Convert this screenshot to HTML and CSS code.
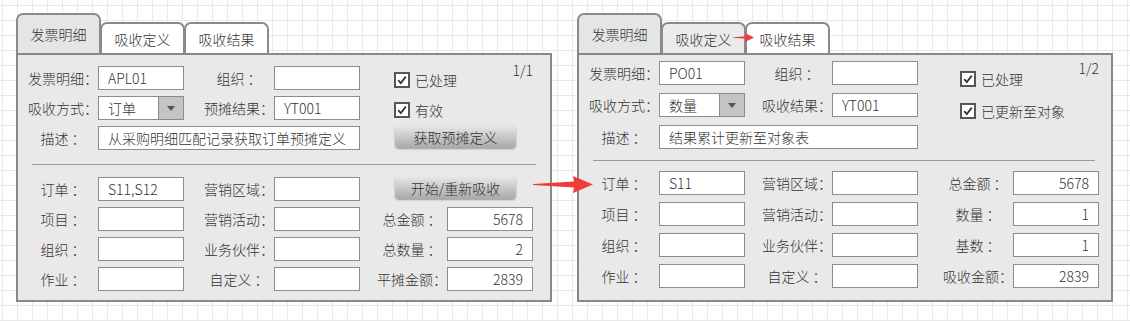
FILE: index.html
```html
<!DOCTYPE html>
<html lang="zh-CN">
<head>
  <meta charset="UTF-8" />
  <title>发票吸收</title>
  <link rel="stylesheet" href="styles.css">
</head>
<body>

  <div class="page">

    <!-- 吸收定义 -->
    <div class="window">
      <div class="tabs">
        <div class="tab tab--active">发票明细</div>
        <div class="tab">吸收定义</div>
        <div class="tab">吸收结果</div>
      </div>
      <div class="panel">
        <div class="grid">
          <label class="lbl col-1">发票明细：</label>
          <input type="text" class="txt col-2" value="APL01">
          <label class="lbl col-4">组织 ：</label>
          <input type="text" class="txt col-5" value="">
          <div class="side-top">
            <div class="check"><svg viewBox="0 0 16 16"><rect x="1" y="1" width="14" height="14" fill="#fff" stroke="#555" stroke-width="2"/><path d="M4.2 8.2 L6.8 11 L11.8 4.6" fill="none" stroke="#333" stroke-width="1.8"/></svg>已处理</div>
            <span class="pager">1/1</span>
          </div>

          <label class="lbl col-1">吸收方式：</label>
          <div class="select col-2"><span>订单</span><span class="select-btn"></span></div>
          <label class="lbl col-4">预摊结果：</label>
          <input type="text" class="txt col-5" value="YT001">
          <div class="check span-side"><svg viewBox="0 0 16 16"><rect x="1" y="1" width="14" height="14" fill="#fff" stroke="#555" stroke-width="2"/><path d="M4.2 8.2 L6.8 11 L11.8 4.6" fill="none" stroke="#333" stroke-width="1.8"/></svg>有效</div>

          <label class="lbl col-1">描述 ：</label>
          <input type="text" class="txt span-desc" value="从采购明细匹配记录获取订单预摊定义">
          <button type="button" class="btn span-side">获取预摊定义</button>
        </div>

        <div class="divider"></div>

        <div class="grid">
          <label class="lbl col-1">订单 ：</label>
          <input type="text" class="txt col-2" value="S11,S12">
          <label class="lbl col-4">营销区域：</label>
          <input type="text" class="txt col-5" value="">
          <button type="button" class="btn span-side">开始/重新吸收</button>

          <label class="lbl col-1">项目 ：</label>
          <input type="text" class="txt col-2" value="">
          <label class="lbl col-4">营销活动：</label>
          <input type="text" class="txt col-5" value="">
          <label class="lbl col-7">总金额 ：</label>
          <input type="text" class="txt txt--num col-8" value="5678">

          <label class="lbl col-1">组织 ：</label>
          <input type="text" class="txt col-2" value="">
          <label class="lbl col-4">业务伙伴：</label>
          <input type="text" class="txt col-5" value="">
          <label class="lbl col-7">总数量 ：</label>
          <input type="text" class="txt txt--num col-8" value="2">

          <label class="lbl col-1">作业 ：</label>
          <input type="text" class="txt col-2" value="">
          <label class="lbl col-4">自定义 ：</label>
          <input type="text" class="txt col-5" value="">
          <label class="lbl col-7">平摊金额：</label>
          <input type="text" class="txt txt--num col-8" value="2839">
        </div>
      </div>
    </div>

    <!-- 吸收结果 -->
    <div class="window window--result">
      <div class="tabs">
        <div class="tab tab--active">发票明细</div>
        <div class="tab tab--grey">吸收定义</div>
        <div class="tab">吸收结果</div>
        <svg class="tab-arrow" viewBox="0 0 21 9"><polygon points="0,4.2 13,3.2 12,0 21,4.5 12,9 13,5.8 0,4.8" fill="#ef3b3b"/></svg>
      </div>
      <div class="panel">
        <div class="grid">
          <label class="lbl col-1">发票明细：</label>
          <input type="text" class="txt col-2" value="PO01">
          <label class="lbl col-4">组织 ：</label>
          <input type="text" class="txt col-5" value="">
          <div class="side-top">
            <div class="check"><svg viewBox="0 0 16 16"><rect x="1" y="1" width="14" height="14" fill="#fff" stroke="#555" stroke-width="2"/><path d="M4.2 8.2 L6.8 11 L11.8 4.6" fill="none" stroke="#333" stroke-width="1.8"/></svg>已处理</div>
            <span class="pager">1/2</span>
          </div>

          <label class="lbl col-1">吸收方式：</label>
          <div class="select col-2"><span>数量</span><span class="select-btn"></span></div>
          <label class="lbl col-4">吸收结果：</label>
          <input type="text" class="txt col-5" value="YT001">
          <div class="check span-side"><svg viewBox="0 0 16 16"><rect x="1" y="1" width="14" height="14" fill="#fff" stroke="#555" stroke-width="2"/><path d="M4.2 8.2 L6.8 11 L11.8 4.6" fill="none" stroke="#333" stroke-width="1.8"/></svg>已更新至对象</div>

          <label class="lbl col-1">描述 ：</label>
          <input type="text" class="txt span-desc" value="结果累计更新至对象表">
        </div>

        <div class="divider"></div>

        <div class="grid">
          <label class="lbl col-1">订单 ：</label>
          <input type="text" class="txt col-2" value="S11">
          <label class="lbl col-4">营销区域：</label>
          <input type="text" class="txt col-5" value="">
          <label class="lbl col-7">总金额 ：</label>
          <input type="text" class="txt txt--num col-8" value="5678">

          <label class="lbl col-1">项目 ：</label>
          <input type="text" class="txt col-2" value="">
          <label class="lbl col-4">营销活动：</label>
          <input type="text" class="txt col-5" value="">
          <label class="lbl col-7">数量 ：</label>
          <input type="text" class="txt txt--num col-8" value="1">

          <label class="lbl col-1">组织 ：</label>
          <input type="text" class="txt col-2" value="">
          <label class="lbl col-4">业务伙伴：</label>
          <input type="text" class="txt col-5" value="">
          <label class="lbl col-7">基数 ：</label>
          <input type="text" class="txt txt--num col-8" value="1">

          <label class="lbl col-1">作业 ：</label>
          <input type="text" class="txt col-2" value="">
          <label class="lbl col-4">自定义 ：</label>
          <input type="text" class="txt col-5" value="">
          <label class="lbl col-7">吸收金额：</label>
          <input type="text" class="txt txt--num col-8" value="2839">
        </div>
      </div>
    </div>

    <svg class="flow-arrow" viewBox="0 0 60 17"><polygon points="0,8 41,5.5 40,0 60,8.5 40,17 41,11.5 0,9" fill="#ef3b3b"/></svg>
  </div>

</body>
</html>
```

FILE: styles.css
```css
* {
  margin: 0;
  padding: 0;
  box-sizing: border-box;
}

body {
  font-family: "Noto Sans CJK SC", "Noto Sans", sans-serif;
  font-size: 14px;
  font-weight: 300;
  color: #333;
  background-color: #fff;
  background-image:
    linear-gradient(to right, #e9e9e9 1px, transparent 1px),
    linear-gradient(to bottom, #e9e9e9 1px, transparent 1px);
  background-size: 15px 15px;
  background-position: 2px 5px;
  min-height: 321px;
}

.page {
  position: relative;
  display: flex;
  gap: 25px;
  padding: 13px 0 0 16px;
}

.window {
  width: 536px;
}

/* tabs */
.tabs {
  position: relative;
  display: flex;
  align-items: flex-end;
  height: 40px;
}

.tab {
  width: 85px;
  height: 31px;
  margin-left: -1px;
  border: 2px solid #8a8a8a;
  border-bottom: none;
  border-radius: 7px 7px 0 0;
  background: #fff;
  display: flex;
  align-items: center;
  justify-content: center;
}

.tab:first-child {
  margin-left: 0;
}

.tab--active {
  height: 40px;
  background: #e5e5e5;
}

.tab--grey {
  background: #ebebeb;
}

.tab-arrow {
  position: absolute;
  left: 156px;
  top: 20px;
  width: 21px;
  height: 9px;
}

/* panel */
.panel {
  height: 249px;
  border: 2px solid #888;
  background: #e9e9e9;
  padding: 11px 14px 0 10px;
}

.grid {
  display: grid;
  grid-template-columns: 70px 86px 20px 70px 86px 17px 70px 86px;
  grid-auto-rows: 24px;
  row-gap: 6px;
}

.col-1 { grid-column: 1; }
.col-2 { grid-column: 2; }
.col-4 { grid-column: 4; }
.col-5 { grid-column: 5; }
.col-7 { grid-column: 7; }
.col-8 { grid-column: 8; }
.span-desc { grid-column: 2 / 6; }
.span-side { grid-column: 7 / 9; }

.lbl {
  display: flex;
  align-items: center;
  justify-content: center;
  white-space: pre;
}

.txt {
  width: 100%;
  height: 24px;
  border: 1px solid #8c8c8c;
  background: #fff;
  padding: 0 9px;
  font: inherit;
  color: #333;
  outline: none;
}

.txt--num {
  text-align: right;
}

.select {
  display: flex;
  height: 24px;
  border: 1px solid #8c8c8c;
  background: #fff;
}

.select span:first-child {
  flex: 1;
  padding-left: 9px;
  line-height: 22px;
}

.select-btn {
  width: 25px;
  border-left: 1px solid #8c8c8c;
  background: #c4c4c4;
  display: flex;
  align-items: center;
  justify-content: center;
}

.select-btn::after {
  content: "";
  border-left: 4px solid transparent;
  border-right: 4px solid transparent;
  border-top: 5px solid #555;
}

.side-top {
  grid-column: 7 / 9;
  display: flex;
  justify-content: space-between;
  align-items: flex-start;
}

.check {
  display: flex;
  align-items: center;
  gap: 5px;
  height: 16px;
  margin: 6px 0 0 17px;
  align-self: start;
  white-space: nowrap;
}

.check svg {
  width: 16px;
  height: 16px;
}

.pager {
  line-height: 20px;
  margin-top: -6px;
}

.btn {
  align-self: start;
  width: 121px;
  height: 23px;
  margin: -1px 0 0 18px;
  border: none;
  border-radius: 4px;
  background: linear-gradient(to bottom, #e9e9e9, #a9a9a9);
  box-shadow: 0 1px 2px rgba(0, 0, 0, 0.35);
  font: inherit;
  color: #333;
}

.divider {
  height: 1px;
  background: #9a9a9a;
  margin: 14px 0 12px 4px;
}

/* result window sits a little higher */
.window--result .panel {
  padding: 6px 12px 0 10px;
}

.window--result .grid {
  grid-template-columns: 70px 86px 17px 70px 86px 25px 70px 86px;
  row-gap: 7px;
}

.window--result .grid:first-child {
  row-gap: 8px;
}

.window--result .check {
  margin-top: 10px;
}

.window--result .pager {
  margin-top: -3px;
}

.window--result .divider {
  margin: 11px 4px 10px 4px;
}

.flow-arrow {
  position: absolute;
  left: 533px;
  top: 176px;
  width: 60px;
  height: 17px;
}
```
